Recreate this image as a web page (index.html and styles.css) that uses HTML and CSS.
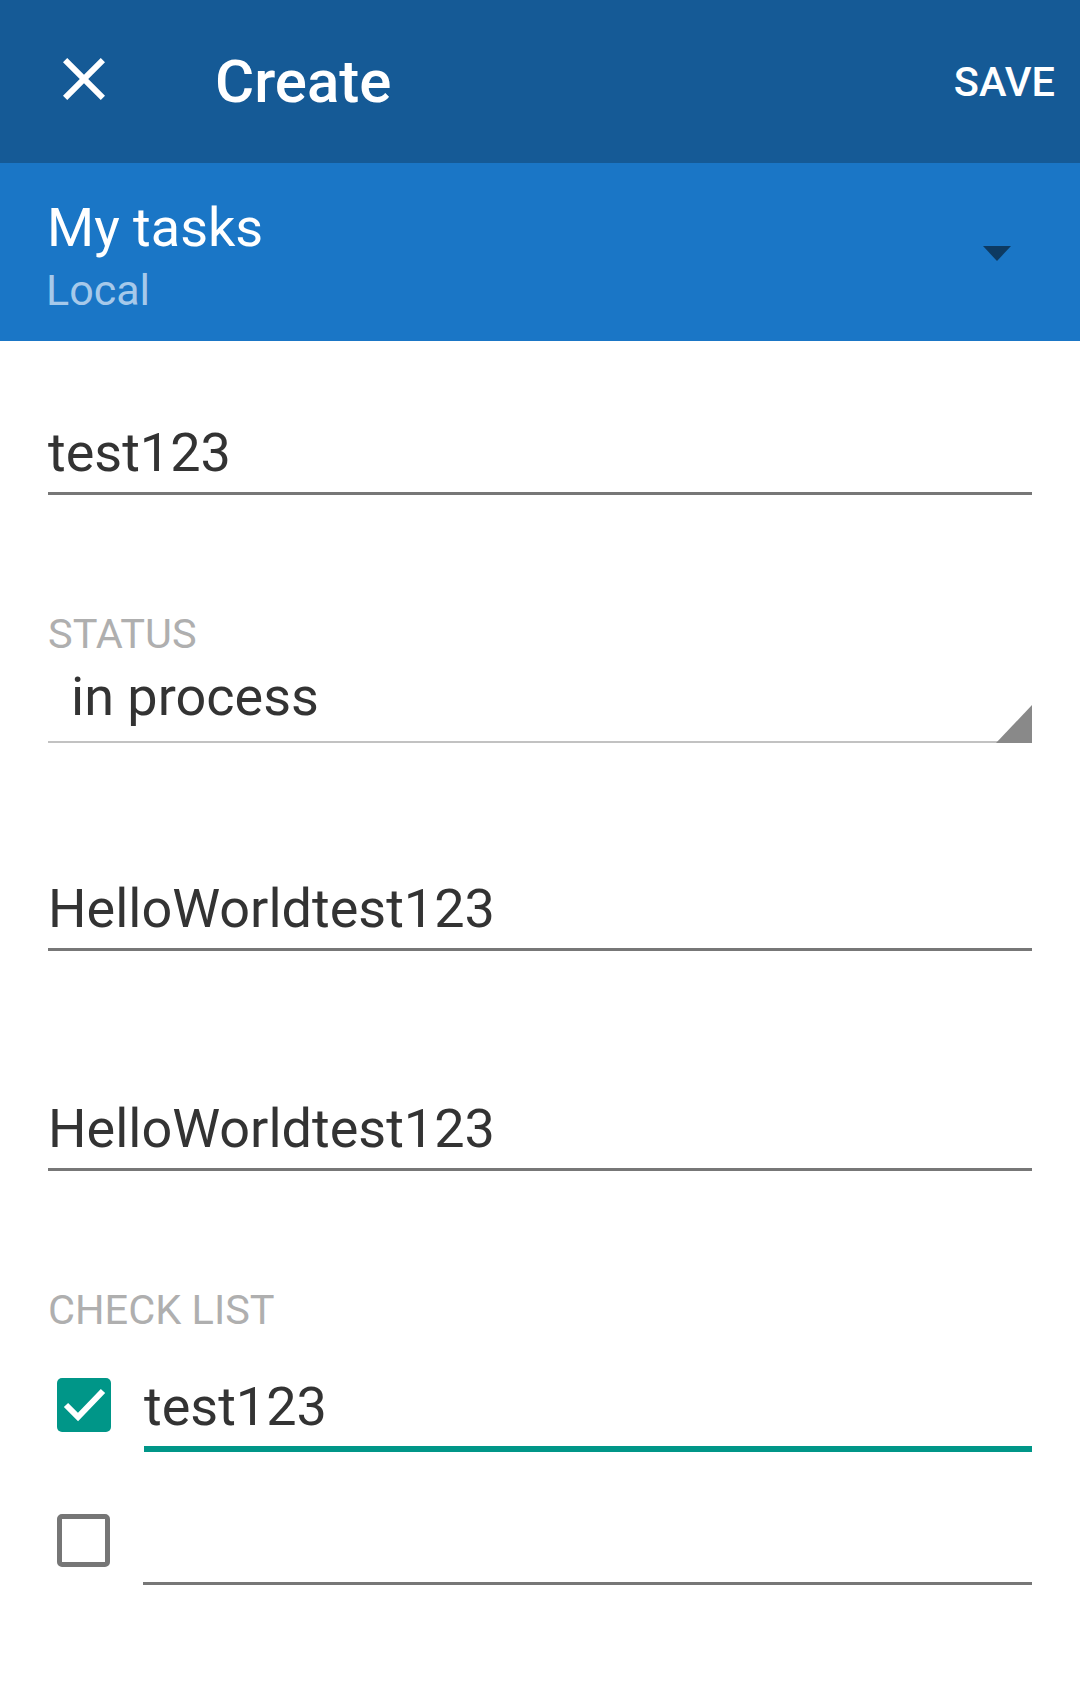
FILE: index.html
```html
<!DOCTYPE html>
<html lang="en">
<head>
<meta charset="utf-8">
<title>Create</title>
<link rel="stylesheet" href="styles.css">
</head>
<body>
<div class="app">
  <header class="toolbar">
    <svg class="close-icon" viewBox="5 5 14 14" width="42" height="42" aria-hidden="true">
      <path fill="#ffffff" d="M19 6.41L17.59 5 12 10.59 6.41 5 5 6.41 10.59 12 5 17.59 6.41 19 12 13.41 17.59 19 19 17.59 13.41 12z"/>
    </svg>
    <div class="toolbar-title">Create</div>
    <div class="toolbar-action">SAVE</div>
  </header>

  <section class="account">
    <div class="account-text">
      <div class="account-name">My tasks</div>
      <div class="account-type">Local</div>
    </div>
    <div class="account-arrow"></div>
  </section>

  <main class="form">
    <div class="field field-title">
      <div class="field-text">test123</div>
    </div>

    <div class="group group-status">
      <div class="label">STATUS</div>
      <div class="spinner">
        <div class="field-text spinner-text">in process</div>
      </div>
    </div>

    <div class="field field-loc">
      <div class="field-text">HelloWorldtest123</div>
    </div>

    <div class="field field-desc">
      <div class="field-text">HelloWorldtest123</div>
    </div>

    <div class="label label-checklist">CHECK LIST</div>

    <div class="check-row check-row-first">
      <div class="checkbox checkbox-on">
        <svg viewBox="0 0 54 54" width="54" height="54" aria-hidden="true">
          <polyline points="9,27 21,39 46,13" fill="none" stroke="#ffffff" stroke-width="6"/>
        </svg>
      </div>
      <div class="check-input check-input-focused">
        <div class="field-text">test123</div>
      </div>
    </div>

    <div class="check-row check-row-second">
      <div class="checkbox checkbox-off"></div>
      <div class="check-input">
        <div class="field-text field-empty"></div>
      </div>
    </div>
  </main>
</div>
</body>
</html>
```

FILE: styles.css
```css
html, body {
  margin: 0;
  padding: 0;
  background: #ffffff;
}

body {
  font-family: Roboto, "Noto Sans", "Liberation Sans", sans-serif;
  color: #333333;
}

.app {
  width: 1080px;
  min-height: 1699px;
  background: #ffffff;
}

/* Toolbar */
.toolbar {
  height: 163px;
  background: #155a96;
  display: flex;
  align-items: center;
  padding: 0 25px 0 63px;
  box-sizing: border-box;
  color: #ffffff;
}

.close-icon {
  display: block;
  flex: none;
  margin-bottom: 5px;
}

.toolbar-title {
  margin-left: 110px;
  font-size: 60px;
  font-weight: 500;
  line-height: normal;
  flex: 1;
}

.toolbar-action {
  font-size: 41.5px;
  font-weight: 500;
  line-height: normal;
}

/* Account selector */
.account {
  height: 178px;
  box-sizing: border-box;
  background: #1a76c6;
  display: flex;
  align-items: flex-start;
  padding-left: 47px;
}

.account-text {
  flex: 1;
  padding-top: 33px;
}

.account-name {
  font-size: 54px;
  line-height: 64px;
  color: #ffffff;
}

.account-type {
  margin-top: 5px;
  margin-left: -1px;
  font-size: 43px;
  line-height: 50px;
  color: #a6c9ea;
}

.account-arrow {
  align-self: center;
  margin-top: 3px;
  margin-right: 69px;
  width: 0;
  height: 0;
  border-left: 14.5px solid transparent;
  border-right: 14.5px solid transparent;
  border-top: 15px solid #0d3a62;
}

/* Form */
.form {
  padding: 0 48px;
}

.field-text {
  font-size: 54px;
  line-height: 64px;
  color: #333333;
  white-space: nowrap;
}

.field-empty {
  height: 64px;
}

.field {
  padding-bottom: 7px;
  border-bottom: 3px solid #777777;
}

.field-title {
  margin-top: 80px;
}

.group-status {
  margin-top: 115px;
}

.label {
  font-size: 41.5px;
  line-height: 47px;
  color: #afafaf;
}

.spinner {
  position: relative;
  margin-top: 8px;
  padding-bottom: 12px;
  border-bottom: 2px solid #c2c2c2;
}

.spinner-text {
  padding-left: 23px;
}

.spinner::after {
  content: "";
  position: absolute;
  right: 0;
  bottom: -2px;
  width: 0;
  height: 0;
  border-left: 36px solid transparent;
  border-bottom: 38px solid #898989;
}

.field-loc {
  margin-top: 134px;
}

.field-desc {
  margin-top: 146px;
}

.label-checklist {
  margin-top: 115px;
}

.check-row {
  display: flex;
  align-items: flex-start;
}

.check-row-first {
  margin-top: 42px;
}

.check-row-second {
  margin-top: 59px;
}

.checkbox {
  flex: none;
  width: 54px;
  height: 54px;
  margin-left: 9px;
  margin-top: 3px;
  box-sizing: border-box;
  border-radius: 5px;
}

.checkbox svg {
  display: block;
}

.checkbox-on {
  background: #009688;
}

.checkbox-off {
  border: 5px solid #767676;
  background: #ffffff;
  width: 53px;
  height: 53px;
}

.check-input {
  flex: 1;
  margin-left: 33px;
  padding-bottom: 7px;
  border-bottom: 3px solid #777777;
}

.check-input-focused {
  border-bottom: 6px solid #009688;
}
```
